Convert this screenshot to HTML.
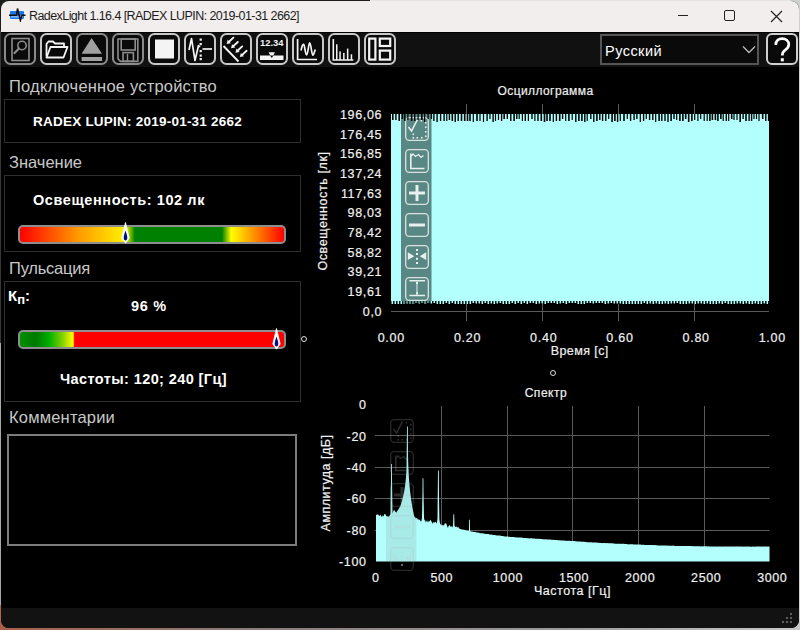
<!DOCTYPE html><html><head><meta charset="utf-8"><style>
*{margin:0;padding:0;box-sizing:border-box}
html,body{width:800px;height:630px;overflow:hidden;background:#1c1c1c}
body{position:relative;font-family:"Liberation Sans",sans-serif}
.a{position:absolute}
.t{position:absolute;white-space:nowrap;line-height:1}
</style></head><body>
<div class="a" style="left:370px;top:0;width:430px;height:2px;background:#e4e4e4"></div>
<div class="a" style="left:790px;top:0;width:10px;height:630px;background:#cfcfcf"></div>
<div class="a" style="left:0;top:30px;width:1px;height:313px;background:#383838"></div>
<div class="a" style="left:0;top:343px;width:1px;height:262px;background:#a8a8a8"></div>
<div class="a" style="left:0;top:605px;width:1px;height:25px;background:#b06848"></div>
<div class="a" style="left:0;top:620px;width:800px;height:10px;background:linear-gradient(90deg,#a8604a,#8a7a78 30%,#9a9a9a 70%,#c8c8c8)"></div>
<div class="a" id="win" style="left:1px;top:1px;width:798px;height:627px;background:#000;border-radius:8px;overflow:hidden">
</div>
<div class="a" style="left:1px;top:1px;width:798px;height:31px;background:#f2eeee;border-radius:8px 8px 0 0"></div>
<div class="a" style="left:1px;top:32px;width:798px;height:35px;background:#111"></div>
<div class="a" style="left:1px;top:32px;width:798px;height:1px;background:#000"></div>
<div class="a" style="left:1px;top:608px;width:798px;height:20px;background:#121212;border-radius:0 0 8px 8px"></div>
<!-- title icon -->
<svg class="a" style="left:8px;top:6px" width="20" height="16" viewBox="0 0 20 16">
<rect x="2" y="5" width="14" height="8" rx="1" fill="#1a78e8"/><rect x="3" y="10" width="12" height="1.6" fill="#7ab8ff"/>
<path d="M1 9.2 H8.5 L9.5 2.5 L12.4 14.5 L14 9.3 H17.5" fill="none" stroke="#111" stroke-width="1.5"/>
</svg>
<!-- window controls -->
<div class="a" style="left:678px;top:15px;width:10px;height:1px;background:#222"></div>
<div class="a" style="left:724px;top:10px;width:11px;height:11px;border:1.2px solid #222;border-radius:2px"></div>
<svg class="a" style="left:770px;top:9.5px" width="13" height="13" viewBox="0 0 13 13"><path d="M1 1 L12 12 M12 1 L1 12" stroke="#222" stroke-width="1.2"/></svg>
<svg class="a" style="left:4px;top:33px" width="32" height="32" viewBox="0 0 32 32">
<rect x="1" y="1" width="30" height="30" rx="5.5" fill="#0a0a0a" stroke="#8a8a8a" stroke-width="2"/><rect x="8" y="5.5" width="17" height="22" fill="none" stroke="#8c8c8c" stroke-width="1.6"/>
<circle cx="18" cy="12.5" r="4.2" fill="none" stroke="#8c8c8c" stroke-width="1.6"/>
<line x1="15" y1="15.5" x2="10.5" y2="20" stroke="#8c8c8c" stroke-width="2.2" stroke-linecap="round"/></svg><svg class="a" style="left:40px;top:33px" width="32" height="32" viewBox="0 0 32 32">
<rect x="1" y="1" width="30" height="30" rx="5.5" fill="#0a0a0a" stroke="#c8c8c8" stroke-width="2"/><path d="M6.5 23.5 V11 L8.5 8.5 H13 L15 10.5 H24 V13" fill="none" stroke="#f4f4f4" stroke-width="1.8" stroke-linejoin="round"/>
<path d="M6.5 24.5 L10.5 14 H27.5 L23.5 24.5 Z" fill="none" stroke="#f4f4f4" stroke-width="1.8" stroke-linejoin="round"/></svg><svg class="a" style="left:76px;top:33px" width="32" height="32" viewBox="0 0 32 32">
<rect x="1" y="1" width="30" height="30" rx="5.5" fill="#0a0a0a" stroke="#8a8a8a" stroke-width="2"/><path d="M15.6 5 L26 20.8 H5.6 Z" fill="#a0a0a0"/><rect x="5.6" y="24" width="20.5" height="4" fill="#a0a0a0"/></svg><svg class="a" style="left:112px;top:33px" width="32" height="32" viewBox="0 0 32 32">
<rect x="1" y="1" width="30" height="30" rx="5.5" fill="#0a0a0a" stroke="#8a8a8a" stroke-width="2"/><path d="M6 6 H25.8 V28.4 H8.5 L6 25.9 Z" fill="none" stroke="#8c8c8c" stroke-width="1.6"/>
<rect x="9.2" y="6" width="14" height="11" fill="none" stroke="#8c8c8c" stroke-width="1.6"/>
<rect x="11" y="19.6" width="10.4" height="8.8" fill="none" stroke="#8c8c8c" stroke-width="1.6"/>
<line x1="15.5" y1="21" x2="15.5" y2="28" stroke="#8c8c8c" stroke-width="1.4"/></svg><svg class="a" style="left:148px;top:33px" width="32" height="32" viewBox="0 0 32 32">
<rect x="1" y="1" width="30" height="30" rx="5.5" fill="#0a0a0a" stroke="#c8c8c8" stroke-width="2"/><rect x="7" y="6.5" width="19" height="19" fill="#f4f4f4"/></svg><svg class="a" style="left:184px;top:33px" width="32" height="32" viewBox="0 0 32 32">
<rect x="1" y="1" width="30" height="30" rx="5.5" fill="#0a0a0a" stroke="#c8c8c8" stroke-width="2"/><path d="M5 17 L7.5 5.5 L11 27.5 L14.5 12.5 L16 14" fill="none" stroke="#f4f4f4" stroke-width="1.7" stroke-linejoin="round"/>
<rect x="15.6" y="5.5" width="2.2" height="2.2" fill="#f4f4f4"/><rect x="15.6" y="10" width="2.2" height="2.2" fill="#f4f4f4"/>
<rect x="15.6" y="17" width="2.2" height="2.2" fill="#f4f4f4"/><rect x="15.6" y="21.5" width="2.2" height="2.2" fill="#f4f4f4"/><rect x="15.6" y="25" width="2.2" height="2.2" fill="#f4f4f4"/>
<line x1="18.5" y1="16" x2="28" y2="16" stroke="#f4f4f4" stroke-width="1.7"/></svg><svg class="a" style="left:220px;top:33px" width="32" height="32" viewBox="0 0 32 32">
<rect x="1" y="1" width="30" height="30" rx="5.5" fill="#0a0a0a" stroke="#c8c8c8" stroke-width="2"/><line x1="3.5" y1="13" x2="18.5" y2="28.5" stroke="#f4f4f4" stroke-width="1.8"/><line x1="13.40" y1="4.60" x2="9.25" y2="8.46" stroke="#f4f4f4" stroke-width="1.9" stroke-linecap="round"/><path d="M6.60 10.90 L10.81 10.15 L7.69 6.77 Z" fill="#f4f4f4"/><line x1="17.80" y1="9.00" x2="13.65" y2="12.86" stroke="#f4f4f4" stroke-width="1.9" stroke-linecap="round"/><path d="M11.00 15.30 L15.21 14.55 L12.09 11.17 Z" fill="#f4f4f4"/><line x1="22.20" y1="13.40" x2="18.05" y2="17.26" stroke="#f4f4f4" stroke-width="1.9" stroke-linecap="round"/><path d="M15.40 19.70 L19.61 18.95 L16.49 15.57 Z" fill="#f4f4f4"/><line x1="26.60" y1="17.80" x2="22.45" y2="21.66" stroke="#f4f4f4" stroke-width="1.9" stroke-linecap="round"/><path d="M19.80 24.10 L24.01 23.35 L20.89 19.97 Z" fill="#f4f4f4"/></svg><svg class="a" style="left:256px;top:33px" width="32" height="32" viewBox="0 0 32 32">
<rect x="1" y="1" width="30" height="30" rx="5.5" fill="#0a0a0a" stroke="#c8c8c8" stroke-width="2"/><text x="4" y="13" font-family="Liberation Sans" font-weight="700" font-size="9.9" fill="#f4f4f4" textLength="23.4" lengthAdjust="spacingAndGlyphs">12.34</text>
<rect x="4" y="22.5" width="23.5" height="4.5" fill="#f4f4f4"/><path d="M12.5 19.3 H19 L15.75 25 Z" fill="#f4f4f4"/><path d="M14 22.5 H17.5 L15.75 25 Z" fill="#0a0a0a"/></svg><svg class="a" style="left:292px;top:33px" width="32" height="32" viewBox="0 0 32 32">
<rect x="1" y="1" width="30" height="30" rx="5.5" fill="#0a0a0a" stroke="#c8c8c8" stroke-width="2"/><path d="M5.6 6 V26.5 H25" fill="none" stroke="#f4f4f4" stroke-width="1.7"/>
<path d="M9 17.5 C10 13, 10.8 11, 11.6 11.3 C12.8 11.8, 13.2 21.8, 14.6 21.8 C16 21.8, 16.5 9.9, 17.7 9.9 C19 9.9, 19.6 22.2, 20.9 22.2 C22 22.2, 22.5 18, 23.4 16.5" fill="none" stroke="#f4f4f4" stroke-width="1.7"/></svg><svg class="a" style="left:328px;top:33px" width="32" height="32" viewBox="0 0 32 32">
<rect x="1" y="1" width="30" height="30" rx="5.5" fill="#0a0a0a" stroke="#c8c8c8" stroke-width="2"/><path d="M5.3 6 V27 H25.3" fill="none" stroke="#f4f4f4" stroke-width="1.6"/><rect x="8" y="11.3" width="1.5" height="15.7" fill="#f4f4f4"/><rect x="11.3" y="18.4" width="1.5" height="8.600000000000001" fill="#f4f4f4"/><rect x="15.1" y="19.9" width="1.5" height="7.100000000000001" fill="#f4f4f4"/><rect x="18.9" y="15.6" width="1.5" height="11.4" fill="#f4f4f4"/><rect x="22.7" y="21.3" width="1.5" height="5.699999999999999" fill="#f4f4f4"/></svg><svg class="a" style="left:364px;top:33px" width="32" height="32" viewBox="0 0 32 32">
<rect x="1" y="1" width="30" height="30" rx="5.5" fill="#0a0a0a" stroke="#c8c8c8" stroke-width="2"/><rect x="5.2" y="5.6" width="6.2" height="21" fill="none" stroke="#f4f4f4" stroke-width="2.2"/>
<rect x="15.8" y="5.6" width="10.4" height="7.4" fill="none" stroke="#f4f4f4" stroke-width="2.2"/>
<rect x="15.8" y="17.6" width="10.4" height="9" fill="none" stroke="#f4f4f4" stroke-width="2.2"/></svg>
<!-- language combo -->
<div class="a" style="left:600px;top:34px;width:159px;height:31px;border:2px solid #555;background:#0a0a0a"></div>
<svg class="a" style="left:742px;top:45px" width="14" height="9" viewBox="0 0 14 9"><path d="M1 1.5 L7 7.5 L13 1.5" fill="none" stroke="#bbb" stroke-width="1.3"/></svg>
<svg class="a" style="left:766px;top:33px" width="32" height="32" viewBox="766 33 32 32">
<rect x="767" y="34" width="30" height="30" rx="5" fill="#0a0a0a" stroke="#d0d0d0" stroke-width="2"/>
<path d="M775.8 45 C775.8 40.5, 778.8 38.6, 782.2 38.6 C785.8 38.6, 788.8 40.8, 788.8 44.5 C788.8 47.8, 786.5 49.2, 784.5 50.6 C783 51.7, 782.3 52.8, 782.3 55.6" fill="none" stroke="#fff" stroke-width="2.7"/>
<rect x="780.8" y="58.2" width="3" height="3.2" fill="#fff"/></svg>

<!-- left panels -->
<div class="a" style="left:4px;top:99px;width:297px;height:44px;border:1px solid #2e2e2e"></div>
<div class="a" style="left:4px;top:175px;width:297px;height:77px;border:1px solid #2e2e2e"></div>
<div class="a" style="left:4px;top:281px;width:297px;height:121px;border:1px solid #2e2e2e"></div>
<div class="a" style="left:7px;top:434px;width:290px;height:112px;border:2px solid #7c7c7c"></div>
<!-- gauges -->
<div class="a" style="left:18px;top:225px;width:268px;height:19px;border:2px solid #8e8e8e;border-radius:5px;background:linear-gradient(90deg,#ff0000 0%,#ff9900 22%,#ffee00 39%,#ffff00 40%,#008000 43.5%,#008000 76.5%,#ffff00 80%,#ff9900 88%,#ff0000 100%)"></div>
<svg class="a" style="left:119px;top:221px" width="13" height="23" viewBox="0 0 13 23"><path d="M6.5 1.5 L10.2 17 L6.5 22.2 L2.8 17 Z" fill="#fff" stroke="#fff" stroke-width="0.8" stroke-linejoin="round"/><path d="M6.5 9.5 C7.5 12.5, 8.3 15, 8.3 16.8 C8.3 18.5, 7.5 19.5, 6.5 19.5 C5.5 19.5, 4.7 18.5, 4.7 16.8 C4.7 15, 5.5 12.5, 6.5 9.5 Z" fill="#000f80"/></svg>
<div class="a" style="left:18px;top:330px;width:268px;height:19px;border:2px solid #8e8e8e;border-radius:5px;background:linear-gradient(90deg,#009000 0%,#007800 6%,#00b000 11%,#80d000 16%,#ffff00 20.1%,#ff0000 20.7%,#ff0000 100%)"></div>
<svg class="a" style="left:269.5px;top:327px" width="13" height="23" viewBox="0 0 13 23"><path d="M6.5 1.5 L10.2 17 L6.5 22.2 L2.8 17 Z" fill="#fff" stroke="#fff" stroke-width="0.8" stroke-linejoin="round"/><path d="M6.5 9.5 C7.5 12.5, 8.3 15, 8.3 16.8 C8.3 18.5, 7.5 19.5, 6.5 19.5 C5.5 19.5, 4.7 18.5, 4.7 16.8 C4.7 15, 5.5 12.5, 6.5 9.5 Z" fill="#000f80"/></svg>
<div class="t" style="left:8px;top:288px;font-size:15px;font-weight:700;color:#fff">К<span style="font-size:13px;position:relative;top:3px">п</span>:</div>
<!-- splitter handles -->
<div class="a" style="left:300.5px;top:336.3px;width:6.2px;height:6.2px;border:1.2px solid #ddd;border-radius:50%"></div>
<div class="a" style="left:549.8px;top:370px;width:6.2px;height:6.2px;border:1.2px solid #ddd;border-radius:50%"></div>
<svg class="a" style="left:0;top:0" width="800" height="630">
<line x1="391" y1="311.5" x2="769" y2="311.5" stroke="#5a5a5a" stroke-width="1"/>
<line x1="466.5" y1="104" x2="466.5" y2="115" stroke="#5a5a5a"/><line x1="466.5" y1="304" x2="466.5" y2="321" stroke="#5a5a5a"/><line x1="542.5" y1="104" x2="542.5" y2="115" stroke="#5a5a5a"/><line x1="542.5" y1="304" x2="542.5" y2="321" stroke="#5a5a5a"/><line x1="618.5" y1="104" x2="618.5" y2="115" stroke="#5a5a5a"/><line x1="618.5" y1="304" x2="618.5" y2="321" stroke="#5a5a5a"/><line x1="694.5" y1="104" x2="694.5" y2="115" stroke="#5a5a5a"/><line x1="694.5" y1="304" x2="694.5" y2="321" stroke="#5a5a5a"/>
<rect x="391" y="114" width="378" height="187" fill="#b2fffd"/>
<path d="M391.5 301h1.6v3h-1.6zM394.5 301h1.6v3h-1.6zM397.5 301h1.6v3h-1.6zM400.5 301h1.6v3h-1.6zM403.5 301h1.6v3h-1.6zM406.5 301h1.6v2.5h-1.6zM409.5 301h1.6v3h-1.6zM412.5 301h1.6v3h-1.6zM415.5 301h1.6v2h-1.6zM418.5 301h1.6v2.5h-1.6zM421.5 301h1.6v2h-1.6zM424.5 301h1.6v3h-1.6zM427.5 301h1.6v2h-1.6zM430.5 301h1.6v2.5h-1.6zM433.5 301h1.6v2h-1.6zM436.5 301h1.6v3h-1.6zM439.5 301h1.6v3h-1.6zM442.5 301h1.6v3h-1.6zM445.5 301h1.6v2h-1.6zM448.5 301h1.6v3h-1.6zM451.5 301h1.6v2h-1.6zM454.5 301h1.6v3h-1.6zM457.5 301h1.6v3h-1.6zM460.5 301h1.6v3h-1.6zM463.5 301h1.6v3h-1.6zM466.5 301h1.6v3h-1.6zM469.5 301h1.6v3h-1.6zM472.5 301h1.6v2h-1.6zM475.5 301h1.6v2.5h-1.6zM478.5 301h1.6v2.5h-1.6zM481.5 301h1.6v3h-1.6zM484.5 301h1.6v2h-1.6zM487.5 301h1.6v3h-1.6zM490.5 301h1.6v2.5h-1.6zM493.5 301h1.6v3h-1.6zM496.5 301h1.6v2.5h-1.6zM499.5 301h1.6v2h-1.6zM502.5 301h1.6v3h-1.6zM505.5 301h1.6v3h-1.6zM508.5 301h1.6v3h-1.6zM511.5 301h1.6v2h-1.6zM514.5 301h1.6v3h-1.6zM517.5 301h1.6v2h-1.6zM520.5 301h1.6v3h-1.6zM523.5 301h1.6v2h-1.6zM526.5 301h1.6v3h-1.6zM529.5 301h1.6v2h-1.6zM532.5 301h1.6v2h-1.6zM535.5 301h1.6v3h-1.6zM538.5 301h1.6v2.5h-1.6zM541.5 301h1.6v2.5h-1.6zM544.5 301h1.6v3h-1.6zM547.5 301h1.6v2h-1.6zM550.5 301h1.6v2h-1.6zM553.5 301h1.6v2h-1.6zM556.5 301h1.6v3h-1.6zM559.5 301h1.6v2.5h-1.6zM562.5 301h1.6v2h-1.6zM565.5 301h1.6v3h-1.6zM568.5 301h1.6v2h-1.6zM571.5 301h1.6v2h-1.6zM574.5 301h1.6v2h-1.6zM577.5 301h1.6v3h-1.6zM580.5 301h1.6v3h-1.6zM583.5 301h1.6v3h-1.6zM586.5 301h1.6v2h-1.6zM589.5 301h1.6v2h-1.6zM592.5 301h1.6v2.5h-1.6zM595.5 301h1.6v2h-1.6zM598.5 301h1.6v2h-1.6zM601.5 301h1.6v2h-1.6zM604.5 301h1.6v3h-1.6zM607.5 301h1.6v2.5h-1.6zM610.5 301h1.6v2h-1.6zM613.5 301h1.6v2.5h-1.6zM616.5 301h1.6v2.5h-1.6zM619.5 301h1.6v2.5h-1.6zM622.5 301h1.6v3h-1.6zM625.5 301h1.6v3h-1.6zM628.5 301h1.6v3h-1.6zM631.5 301h1.6v3h-1.6zM634.5 301h1.6v3h-1.6zM637.5 301h1.6v3h-1.6zM640.5 301h1.6v3h-1.6zM643.5 301h1.6v2h-1.6zM646.5 301h1.6v3h-1.6zM649.5 301h1.6v2.5h-1.6zM652.5 301h1.6v3h-1.6zM655.5 301h1.6v2.5h-1.6zM658.5 301h1.6v3h-1.6zM661.5 301h1.6v3h-1.6zM664.5 301h1.6v2.5h-1.6zM667.5 301h1.6v3h-1.6zM670.5 301h1.6v2.5h-1.6zM673.5 301h1.6v2.5h-1.6zM676.5 301h1.6v2h-1.6zM679.5 301h1.6v3h-1.6zM682.5 301h1.6v3h-1.6zM685.5 301h1.6v3h-1.6zM688.5 301h1.6v2.5h-1.6zM691.5 301h1.6v2.5h-1.6zM694.5 301h1.6v3h-1.6zM697.5 301h1.6v2.5h-1.6zM700.5 301h1.6v2.5h-1.6zM703.5 301h1.6v3h-1.6zM706.5 301h1.6v2.5h-1.6zM709.5 301h1.6v3h-1.6zM712.5 301h1.6v3h-1.6zM715.5 301h1.6v3h-1.6zM718.5 301h1.6v2.5h-1.6zM721.5 301h1.6v3h-1.6zM724.5 301h1.6v2h-1.6zM727.5 301h1.6v3h-1.6zM730.5 301h1.6v3h-1.6zM733.5 301h1.6v3h-1.6zM736.5 301h1.6v2.5h-1.6zM739.5 301h1.6v2.5h-1.6zM742.5 301h1.6v3h-1.6zM745.5 301h1.6v2.5h-1.6zM748.5 301h1.6v3h-1.6zM751.5 301h1.6v3h-1.6zM754.5 301h1.6v2.5h-1.6zM757.5 301h1.6v3h-1.6zM760.5 301h1.6v3h-1.6zM763.5 301h1.6v2.5h-1.6zM766.5 301h1.6v3h-1.6z" fill="#b2fffd"/>
<rect x="401" y="114" width="30.5" height="187" fill="#588784"/>
<path d="M403.5 301h1.6v3h-1.6zM406.5 301h1.6v2.5h-1.6zM409.5 301h1.6v3h-1.6zM412.5 301h1.6v3h-1.6zM415.5 301h1.6v2h-1.6zM418.5 301h1.6v2.5h-1.6zM421.5 301h1.6v2h-1.6zM424.5 301h1.6v3h-1.6zM427.5 301h1.6v2h-1.6z" fill="#588784"/>
</svg>
<svg class="a" style="left:405px;top:117px;opacity:1" width="24" height="24" viewBox="0 0 24 24">
<rect x="0.7" y="0.7" width="22.6" height="22.6" rx="3.5" fill="none" stroke="#d8e4e2" stroke-width="1.3"/><path d="M3.5 10 L6.5 14 L12.5 2.5" fill="none" stroke="#e8f0ef" stroke-width="1.6"/><rect x="15.5" y="3" width="1.6" height="1.6" fill="#e8f0ef"/><rect x="20" y="5" width="1.6" height="1.6" fill="#e8f0ef"/><rect x="20" y="9.5" width="1.6" height="1.6" fill="#e8f0ef"/><rect x="20" y="14" width="1.6" height="1.6" fill="#e8f0ef"/><rect x="20" y="18.5" width="1.6" height="1.6" fill="#e8f0ef"/><rect x="16" y="20" width="1.6" height="1.6" fill="#e8f0ef"/><rect x="11.5" y="20" width="1.6" height="1.6" fill="#e8f0ef"/><rect x="7.5" y="20" width="1.6" height="1.6" fill="#e8f0ef"/><rect x="7.5" y="16.5" width="1.6" height="1.6" fill="#e8f0ef"/></svg><svg class="a" style="left:405px;top:149px;opacity:1" width="24" height="24" viewBox="0 0 24 24">
<rect x="0.7" y="0.7" width="22.6" height="22.6" rx="3.5" fill="none" stroke="#d8e4e2" stroke-width="1.3"/><path d="M5.8 4.5 V19.5 H19.5" fill="none" stroke="#e8f0ef" stroke-width="1.6"/><path d="M5.8 7.5 L8 5 L10.5 7.5 L13.5 5.5 L16 8.5 L18.5 6.5" fill="none" stroke="#e8f0ef" stroke-width="1.2"/></svg><svg class="a" style="left:405px;top:181px;opacity:1" width="24" height="24" viewBox="0 0 24 24">
<rect x="0.7" y="0.7" width="22.6" height="22.6" rx="3.5" fill="none" stroke="#d8e4e2" stroke-width="1.3"/><rect x="4" y="10.5" width="16" height="3" fill="#e8f0ef"/><rect x="10.5" y="4" width="3" height="16" fill="#e8f0ef"/></svg><svg class="a" style="left:405px;top:213px;opacity:1" width="24" height="24" viewBox="0 0 24 24">
<rect x="0.7" y="0.7" width="22.6" height="22.6" rx="3.5" fill="none" stroke="#d8e4e2" stroke-width="1.3"/><rect x="4" y="10.5" width="16" height="3" fill="#e8f0ef"/></svg><svg class="a" style="left:405px;top:245px;opacity:1" width="24" height="24" viewBox="0 0 24 24">
<rect x="0.7" y="0.7" width="22.6" height="22.6" rx="3.5" fill="none" stroke="#d8e4e2" stroke-width="1.3"/><path d="M2.8 7.3 L9.3 11.2 L2.8 15 Z M21.2 7.3 L14.7 11.2 L21.2 15 Z" fill="#e8f0ef"/><rect x="11" y="4" width="2" height="2" fill="#e8f0ef"/><rect x="11" y="8" width="2" height="2" fill="#e8f0ef"/><rect x="11" y="12.8" width="2" height="2" fill="#e8f0ef"/><rect x="11" y="17" width="2" height="2" fill="#e8f0ef"/></svg><svg class="a" style="left:405px;top:277px;opacity:1" width="24" height="24" viewBox="0 0 24 24">
<rect x="0.7" y="0.7" width="22.6" height="22.6" rx="3.5" fill="none" stroke="#d8e4e2" stroke-width="1.3"/><path d="M4.4 3.8 H20.1 M4.4 18.4 H20.1" fill="none" stroke="#e8f0ef" stroke-width="1.5"/><path d="M12 4.5 V17.7" fill="none" stroke="#e8f0ef" stroke-width="1"/><rect x="11" y="5" width="2" height="2" fill="#e8f0ef"/><rect x="11" y="15.3" width="2" height="2" fill="#e8f0ef"/></svg>
<svg class="a" style="left:0;top:0" width="800" height="630"><path d="M392.0 114h1.6v6h-1.6zM395.2 114h1.4v6h-1.4zM398.4 114h1.6v7h-1.6zM401.6 114h1.6v5h-1.6zM404.1 114h1.4v7h-1.4zM407.3 114h1.2v6h-1.2zM410.8 114h1.6v7h-1.6zM414.0 114h1.4v7h-1.4zM417.5 114h1.2v6h-1.2zM421.0 114h1.6v6h-1.6zM424.0 114h1.2v8h-1.2zM427.5 114h1.2v5h-1.2zM430.7 114h1.4v5h-1.4zM433.2 114h1.4v7h-1.4zM436.4 114h1.4v8h-1.4zM439.9 114h1.4v7h-1.4zM443.4 114h1.4v7h-1.4zM446.2 114h1.2v7h-1.2zM448.7 114h1.4v6h-1.4zM451.5 114h1.6v7h-1.6zM454.5 114h1.4v8h-1.4zM457.5 114h1.4v7h-1.4zM460.7 114h1.6v7h-1.6zM463.9 114h1.6v7h-1.6zM466.7 114h1.6v7h-1.6zM469.2 114h1.6v7h-1.6zM472.7 114h1.2v8h-1.2zM476.2 114h1.6v7h-1.6zM479.4 114h1.2v7h-1.2zM482.9 114h1.2v8h-1.2zM486.4 114h1.4v7h-1.4zM489.4 114h1.2v5h-1.2zM492.4 114h1.4v8h-1.4zM494.9 114h1.2v7h-1.2zM497.9 114h1.2v6h-1.2zM500.9 114h1.4v7h-1.4zM503.4 114h1.6v5h-1.6zM506.6 114h1.4v5h-1.4zM510.1 114h1.4v7h-1.4zM513.3 114h1.6v7h-1.6zM516.1 114h1.4v5h-1.4zM518.6 114h1.2v5h-1.2zM521.8 114h1.2v7h-1.2zM524.6 114h1.4v7h-1.4zM527.8 114h1.2v7h-1.2zM531.3 114h1.4v5h-1.4zM534.3 114h1.2v7h-1.2zM537.3 114h1.4v7h-1.4zM540.5 114h1.6v7h-1.6zM543.7 114h1.6v8h-1.6zM546.2 114h1.6v7h-1.6zM549.2 114h1.6v7h-1.6zM552.7 114h1.2v8h-1.2zM555.7 114h1.4v7h-1.4zM558.9 114h1.6v7h-1.6zM561.9 114h1.4v5h-1.4zM565.1 114h1.2v7h-1.2zM568.1 114h1.6v7h-1.6zM571.6 114h1.2v6h-1.2zM575.1 114h1.4v8h-1.4zM578.1 114h1.6v7h-1.6zM581.1 114h1.6v7h-1.6zM584.1 114h1.4v8h-1.4zM586.6 114h1.2v7h-1.2zM590.1 114h1.4v5h-1.4zM593.1 114h1.4v8h-1.4zM596.1 114h1.6v7h-1.6zM599.1 114h1.4v6h-1.4zM601.9 114h1.4v7h-1.4zM605.1 114h1.4v7h-1.4zM608.1 114h1.2v5h-1.2zM611.3 114h1.6v8h-1.6zM614.1 114h1.6v7h-1.6zM616.9 114h1.4v8h-1.4zM619.7 114h1.2v7h-1.2zM623.2 114h1.6v7h-1.6zM626.7 114h1.2v5h-1.2zM629.9 114h1.4v7h-1.4zM633.4 114h1.4v6h-1.4zM636.2 114h1.4v5h-1.4zM639.7 114h1.2v8h-1.2zM642.9 114h1.4v7h-1.4zM645.7 114h1.2v5h-1.2zM648.9 114h1.4v6h-1.4zM652.1 114h1.4v6h-1.4zM655.1 114h1.2v8h-1.2zM658.3 114h1.6v7h-1.6zM661.1 114h1.4v7h-1.4zM664.3 114h1.4v7h-1.4zM667.3 114h1.4v8h-1.4zM670.3 114h1.6v7h-1.6zM673.3 114h1.4v5h-1.4zM676.1 114h1.2v6h-1.2zM679.1 114h1.6v7h-1.6zM682.1 114h1.6v7h-1.6zM684.9 114h1.6v5h-1.6zM687.9 114h1.6v8h-1.6zM691.1 114h1.6v7h-1.6zM694.1 114h1.2v6h-1.2zM697.3 114h1.2v7h-1.2zM700.1 114h1.2v5h-1.2zM703.6 114h1.2v7h-1.2zM706.6 114h1.2v7h-1.2zM709.1 114h1.6v7h-1.6zM711.6 114h1.6v6h-1.6zM714.6 114h1.6v6h-1.6zM717.1 114h1.6v7h-1.6zM720.1 114h1.6v5h-1.6zM722.6 114h1.2v7h-1.2zM725.6 114h1.4v7h-1.4zM728.1 114h1.2v7h-1.2zM730.9 114h1.6v5h-1.6zM733.4 114h1.2v6h-1.2zM736.4 114h1.2v6h-1.2zM739.4 114h1.6v8h-1.6zM742.4 114h1.4v5h-1.4zM745.2 114h1.6v7h-1.6zM748.4 114h1.4v7h-1.4zM750.9 114h1.4v7h-1.4zM753.4 114h1.2v5h-1.2zM755.9 114h1.2v5h-1.2zM758.4 114h1.2v7h-1.2zM761.9 114h1.6v5h-1.6zM765.1 114h1.4v7h-1.4zM767.9 114h1.2v7h-1.2z" fill="#000"/></svg>
<svg class="a" style="left:0;top:0" width="800" height="630"><line x1="375" y1="435.5" x2="769.5" y2="435.5" stroke="#5a5a5a"/><line x1="375" y1="467.5" x2="769.5" y2="467.5" stroke="#5a5a5a"/><line x1="375" y1="498.5" x2="769.5" y2="498.5" stroke="#5a5a5a"/><line x1="375" y1="530.5" x2="769.5" y2="530.5" stroke="#5a5a5a"/><line x1="441.5" y1="406" x2="441.5" y2="561" stroke="#5a5a5a"/><line x1="507.5" y1="406" x2="507.5" y2="561" stroke="#5a5a5a"/><line x1="572.5" y1="406" x2="572.5" y2="561" stroke="#5a5a5a"/><line x1="638.5" y1="406" x2="638.5" y2="561" stroke="#5a5a5a"/><line x1="704.5" y1="406" x2="704.5" y2="561" stroke="#5a5a5a"/>
<path d="M376 561.5 L376 515.2 L376.5 515.0 L377 513.9 L377.5 514.5 L378 514.8 L378.5 514.8 L379 515.9 L379.5 515.7 L380 515.3 L380.5 514.6 L381 516.1 L381.5 516.5 L382 517.3 L382.5 515.8 L383 515.3 L383.5 516.8 L384 515.1 L384.5 513.9 L385 514.0 L385.5 514.2 L386 515.5 L386.5 516.6 L387 515.8 L387.5 516.5 L388 516.6 L388.5 516.4 L389 516.8 L389.5 515.8 L390 515.2 L390.5 513.6 L391 478.2 L391.1 464.1 L391.5 464.1 L391.9 464.1 L392 478.2 L392.5 513.7 L393 511.8 L393.5 510.6 L394 510.2 L394.5 510.3 L395 511.3 L395.5 512.0 L396 512.2 L396.5 512.8 L397 511.1 L397.5 511.0 L398 509.6 L398.5 509.8 L399 508.2 L399.5 507.4 L400 507.0 L400.5 505.6 L401 504.1 L401.5 502.5 L402 500.8 L402.5 499.0 L403 497.0 L403.5 494.8 L404 492.4 L404.5 489.6 L405 486.3 L405.5 482.4 L406 477.3 L406.4 471.5 L406.5 469.6 L407 426.5 L407.5 426.5 L407.8 426.5 L408 456.4 L408.4 468.9 L408.5 471.0 L409 479.3 L409.5 485.4 L410 490.5 L410.5 494.8 L411 498.5 L411.5 501.9 L412 505.0 L412.5 507.9 L413 510.5 L413.5 513.0 L414 515.4 L414.5 517.2 L415 516.5 L415.5 518.1 L416 518.7 L416.5 517.9 L417 518.1 L417.5 519.7 L418 518.2 L418.5 519.6 L419 520.4 L419.5 519.4 L420 520.2 L420.5 520.8 L421 521.8 L421.5 520.7 L422 517.6 L422.5 492.3 L422.6 478.2 L423 478.2 L423.4 478.2 L423.5 492.3 L424 517.6 L424.5 520.6 L425 520.0 L425.5 521.5 L426 522.4 L426.5 520.9 L427 520.3 L427.5 521.6 L428 522.5 L428.5 521.5 L429 520.4 L429.5 521.8 L430 520.6 L430.5 520.1 L431 520.6 L431.5 521.4 L432 522.8 L432.5 523.9 L433 521.9 L433.5 522.8 L434 522.0 L434.5 522.9 L435 521.8 L435.5 521.8 L436 522.7 L436.5 523.6 L437 522.1 L437.4 519.6 L437.5 519.0 L438 470.4 L438.5 470.4 L438.8 470.4 L439 498.6 L439.4 519.6 L439.5 520.2 L440 523.3 L440.5 524.6 L441 524.3 L441.5 525.3 L442 525.6 L442.5 525.3 L443 524.7 L443.5 525.6 L444 525.5 L444.5 524.1 L445 523.0 L445.5 523.4 L446 523.6 L446.5 524.1 L447 525.7 L447.5 527.0 L448 527.9 L448.5 526.0 L449 525.5 L449.5 524.6 L450 526.7 L450.5 526.3 L451 526.6 L451.5 526.2 L452 527.1 L452.5 525.8 L452.8 527.7 L453 527.4 L453.4 514.3 L453.5 514.3 L454 514.3 L454.2 514.3 L454.5 526.1 L454.8 525.7 L455 527.1 L455.5 527.1 L456 526.6 L456.5 526.4 L457 527.5 L457.5 527.2 L458 526.9 L458.5 527.5 L459 527.8 L459.5 528.7 L460 528.9 L460.5 529.1 L461 529.3 L461.5 529.4 L462 529.4 L462.5 529.5 L463 529.6 L463.5 529.8 L464 529.8 L464.5 530.0 L465 530.1 L465.5 530.1 L466 530.4 L466.5 530.4 L467 530.6 L467.5 530.7 L468 530.7 L468.5 530.9 L469 530.9 L469.1 519.7 L469.5 519.7 L469.9 519.7 L470 531.1 L470.5 531.3 L471 531.4 L471.5 531.4 L472 531.6 L472.5 531.7 L473 531.7 L473.5 531.8 L474 531.9 L474.5 531.9 L475 532.1 L475.5 532.1 L476 532.3 L476.5 532.4 L477 532.4 L477.5 532.5 L478 532.5 L478.5 532.7 L479 532.8 L479.5 533.0 L480 533.2 L480.5 533.2 L481 533.2 L481.5 533.2 L482 533.2 L482.5 533.2 L483 533.4 L483.5 533.6 L484 533.6 L484.5 533.7 L485 533.8 L485.5 533.9 L486 533.9 L486.5 533.9 L487 534.0 L487.5 534.0 L488 534.0 L488.5 534.1 L489 534.3 L489.5 534.5 L490 534.4 L490.5 534.6 L491 534.5 L491.5 534.6 L492 534.7 L492.5 534.7 L493 534.9 L493.5 535.0 L494 535.0 L494.5 535.1 L495 535.1 L495.5 535.2 L496 535.3 L496.5 535.4 L497 535.4 L497.5 535.4 L498 535.4 L498.5 535.5 L499 535.5 L499.5 535.5 L500 535.6 L500.5 535.7 L501 535.8 L501.5 536.0 L502 536.1 L502.5 536.1 L503 536.1 L503.5 536.2 L504 536.3 L504.5 536.4 L505 536.4 L505.5 536.4 L506 536.4 L506.5 536.5 L507 536.6 L507.5 536.6 L508 536.6 L508.5 536.8 L509 536.8 L509.5 536.8 L510 537.0 L510.5 537.1 L511 537.0 L511.5 537.0 L512 537.1 L512.5 537.1 L513 537.1 L513.5 537.1 L514 537.1 L514.5 537.2 L515 537.2 L515.5 537.4 L516 537.3 L516.5 537.3 L517 537.4 L517.5 537.4 L518 537.5 L518.5 537.5 L519 537.4 L519.5 537.4 L520 537.5 L520.5 537.5 L521 537.7 L521.5 537.6 L522 537.6 L522.5 537.8 L523 537.9 L523.5 537.9 L524 537.9 L524.5 537.9 L525 538.0 L525.5 538.1 L526 538.0 L526.5 538.2 L527 538.1 L527.5 538.2 L528 538.3 L528.5 538.2 L529 538.3 L529.5 538.4 L530 538.4 L530.5 538.3 L531 538.3 L531.5 538.3 L532 538.3 L532.5 538.4 L533 538.4 L533.5 538.5 L534 538.6 L534.5 538.6 L535 538.7 L535.5 538.7 L536 538.7 L536.5 538.7 L537 538.7 L537.5 538.7 L538 538.8 L538.5 538.9 L539 538.8 L539.5 538.8 L540 539.0 L540.5 538.9 L541 538.9 L541.5 539.0 L542 539.0 L542.5 539.2 L543 539.2 L543.5 539.2 L544 539.2 L544.5 539.4 L545 539.3 L545.5 539.3 L546 539.4 L546.5 539.3 L547 539.4 L547.5 539.4 L548 539.4 L548.5 539.6 L549 539.6 L549.5 539.6 L550 539.5 L550.5 539.5 L551 539.7 L551.5 539.7 L552 539.8 L552.5 539.9 L553 539.8 L553.5 539.7 L554 539.8 L554.5 539.9 L555 540.0 L555.5 540.0 L556 539.9 L556.5 540.1 L557 540.0 L557.5 540.2 L558 540.3 L558.5 540.3 L559 540.3 L559.5 540.3 L560 540.4 L560.5 540.3 L561 540.5 L561.5 540.4 L562 540.5 L562.5 540.5 L563 540.6 L563.5 540.6 L564 540.6 L564.5 540.6 L565 540.7 L565.5 540.7 L566 540.7 L566.5 540.8 L567 540.9 L567.5 540.8 L568 540.8 L568.5 540.8 L569 540.8 L569.5 540.8 L570 540.8 L570.5 540.9 L571 540.9 L571.5 540.9 L572 540.9 L572.5 541.0 L573 541.1 L573.5 541.1 L574 541.2 L574.5 541.1 L575 541.1 L575.5 541.3 L576 541.4 L576.5 541.3 L577 541.4 L577.5 541.5 L578 541.4 L578.5 541.5 L579 541.5 L579.5 541.6 L580 541.6 L580.5 541.6 L581 541.7 L581.5 541.8 L582 541.7 L582.5 541.7 L583 541.6 L583.5 541.8 L584 541.8 L584.5 541.8 L585 541.9 L585.5 541.9 L586 542.0 L586.5 542.1 L587 542.2 L587.5 542.3 L588 542.2 L588.5 542.2 L589 542.2 L589.5 542.3 L590 542.3 L590.5 542.4 L591 542.3 L591.5 542.2 L592 542.2 L592.5 542.4 L593 542.5 L593.5 542.4 L594 542.5 L594.5 542.4 L595 542.5 L595.5 542.6 L596 542.6 L596.5 542.6 L597 542.6 L597.5 542.8 L598 542.7 L598.5 542.7 L599 542.8 L599.5 542.9 L600 542.8 L600.5 542.9 L601 543.0 L601.5 543.1 L602 543.1 L602.5 543.2 L603 543.0 L603.5 543.0 L604 543.0 L604.5 543.0 L605 543.0 L605.5 543.1 L606 543.2 L606.5 543.2 L607 543.1 L607.5 543.1 L608 543.3 L608.5 543.2 L609 543.2 L609.5 543.2 L610 543.2 L610.5 543.3 L611 543.3 L611.5 543.3 L612 543.3 L612.5 543.3 L613 543.4 L613.5 543.5 L614 543.5 L614.5 543.6 L615 543.7 L615.5 543.7 L616 543.8 L616.5 543.8 L617 543.7 L617.5 543.7 L618 543.8 L618.5 543.7 L619 543.7 L619.5 543.8 L620 543.8 L620.5 543.8 L621 543.8 L621.5 543.9 L622 543.8 L622.5 543.8 L623 543.8 L623.5 543.8 L624 543.8 L624.5 544.0 L625 544.0 L625.5 544.0 L626 544.1 L626.5 544.1 L627 544.2 L627.5 544.3 L628 544.3 L628.5 544.3 L629 544.4 L629.5 544.2 L630 544.2 L630.5 544.3 L631 544.2 L631.5 544.2 L632 544.2 L632.5 544.2 L633 544.2 L633.5 544.4 L634 544.4 L634.5 544.4 L635 544.5 L635.5 544.4 L636 544.5 L636.5 544.5 L637 544.6 L637.5 544.6 L638 544.6 L638.5 544.7 L639 544.6 L639.5 544.6 L640 544.6 L640.5 544.6 L641 544.7 L641.5 544.8 L642 544.7 L642.5 544.7 L643 544.8 L643.5 544.8 L644 544.8 L644.5 545.0 L645 545.0 L645.5 545.1 L646 545.1 L646.5 545.0 L647 545.0 L647.5 544.9 L648 544.9 L648.5 545.0 L649 544.9 L649.5 544.9 L650 545.1 L650.5 545.0 L651 545.1 L651.5 545.1 L652 545.0 L652.5 545.1 L653 545.2 L653.5 545.1 L654 545.1 L654.5 545.2 L655 545.1 L655.5 545.1 L656 545.2 L656.5 545.3 L657 545.3 L657.5 545.4 L658 545.4 L658.5 545.5 L659 545.5 L659.5 545.6 L660 545.6 L660.5 545.5 L661 545.5 L661.5 545.6 L662 545.6 L662.5 545.6 L663 545.5 L663.5 545.6 L664 545.5 L664.5 545.4 L665 545.5 L665.5 545.6 L666 545.7 L666.5 545.6 L667 545.6 L667.5 545.6 L668 545.7 L668.5 545.7 L669 545.7 L669.5 545.7 L670 545.7 L670.5 545.7 L671 545.7 L671.5 545.8 L672 545.8 L672.5 545.7 L673 545.6 L673.5 545.6 L674 545.8 L674.5 545.9 L675 545.9 L675.5 545.9 L676 545.9 L676.5 545.9 L677 545.9 L677.5 546.0 L678 546.0 L678.5 545.9 L679 545.9 L679.5 545.9 L680 545.9 L680.5 545.9 L681 546.0 L681.5 546.0 L682 545.9 L682.5 545.9 L683 546.0 L683.5 546.1 L684 546.0 L684.5 546.0 L685 545.9 L685.5 546.0 L686 546.0 L686.5 546.1 L687 546.0 L687.5 546.1 L688 546.0 L688.5 545.9 L689 546.0 L689.5 546.0 L690 546.0 L690.5 546.0 L691 546.0 L691.5 546.1 L692 546.2 L692.5 546.1 L693 546.2 L693.5 546.3 L694 546.2 L694.5 546.2 L695 546.2 L695.5 546.2 L696 546.1 L696.5 546.3 L697 546.3 L697.5 546.2 L698 546.3 L698.5 546.3 L699 546.3 L699.5 546.2 L700 546.3 L700.5 546.4 L701 546.4 L701.5 546.3 L702 546.3 L702.5 546.4 L703 546.3 L703.5 546.3 L704 546.2 L704.5 546.2 L705 546.2 L705.5 546.3 L706 546.2 L706.5 546.3 L707 546.4 L707.5 546.4 L708 546.3 L708.5 546.3 L709 546.4 L709.5 546.4 L710 546.5 L710.5 546.5 L711 546.5 L711.5 546.5 L712 546.6 L712.5 546.5 L713 546.5 L713.5 546.5 L714 546.4 L714.5 546.4 L715 546.6 L715.5 546.5 L716 546.4 L716.5 546.5 L717 546.7 L717.5 546.6 L718 546.6 L718.5 546.6 L719 546.5 L719.5 546.5 L720 546.4 L720.5 546.6 L721 546.6 L721.5 546.5 L722 546.6 L722.5 546.7 L723 546.6 L723.5 546.5 L724 546.6 L724.5 546.6 L725 546.6 L725.5 546.6 L726 546.5 L726.5 546.6 L727 546.6 L727.5 546.6 L728 546.6 L728.5 546.5 L729 546.5 L729.5 546.6 L730 546.5 L730.5 546.5 L731 546.5 L731.5 546.5 L732 546.5 L732.5 546.5 L733 546.4 L733.5 546.5 L734 546.4 L734.5 546.5 L735 546.4 L735.5 546.4 L736 546.4 L736.5 546.4 L737 546.3 L737.5 546.4 L738 546.5 L738.5 546.5 L739 546.4 L739.5 546.5 L740 546.5 L740.5 546.6 L741 546.5 L741.5 546.4 L742 546.5 L742.5 546.6 L743 546.7 L743.5 546.6 L744 546.7 L744.5 546.5 L745 546.6 L745.5 546.6 L746 546.7 L746.5 546.6 L747 546.5 L747.5 546.6 L748 546.7 L748.5 546.6 L749 546.6 L749.5 546.5 L750 546.6 L750.5 546.7 L751 546.7 L751.5 546.7 L752 546.7 L752.5 546.6 L753 546.6 L753.5 546.6 L754 546.7 L754.5 546.7 L755 546.7 L755.5 546.6 L756 546.6 L756.5 546.6 L757 546.5 L757.5 546.5 L758 546.6 L758.5 546.5 L759 546.4 L759.5 546.5 L760 546.5 L760.5 546.4 L761 546.5 L761.5 546.6 L762 546.7 L762.5 546.5 L763 546.5 L763.5 546.5 L764 546.5 L764.5 546.5 L765 546.6 L765.5 546.5 L766 546.5 L766.5 546.6 L767 546.7 L767.5 546.6 L768 546.6 L768.5 546.5 L769 546.5 L769.5 546.5 L769.5 561.5 Z" fill="#b2fffd"/>
<clipPath id="spc"><path d="M376 561.5 L376 515.2 L376.5 515.0 L377 513.9 L377.5 514.5 L378 514.8 L378.5 514.8 L379 515.9 L379.5 515.7 L380 515.3 L380.5 514.6 L381 516.1 L381.5 516.5 L382 517.3 L382.5 515.8 L383 515.3 L383.5 516.8 L384 515.1 L384.5 513.9 L385 514.0 L385.5 514.2 L386 515.5 L386.5 516.6 L387 515.8 L387.5 516.5 L388 516.6 L388.5 516.4 L389 516.8 L389.5 515.8 L390 515.2 L390.5 513.6 L391 478.2 L391.1 464.1 L391.5 464.1 L391.9 464.1 L392 478.2 L392.5 513.7 L393 511.8 L393.5 510.6 L394 510.2 L394.5 510.3 L395 511.3 L395.5 512.0 L396 512.2 L396.5 512.8 L397 511.1 L397.5 511.0 L398 509.6 L398.5 509.8 L399 508.2 L399.5 507.4 L400 507.0 L400.5 505.6 L401 504.1 L401.5 502.5 L402 500.8 L402.5 499.0 L403 497.0 L403.5 494.8 L404 492.4 L404.5 489.6 L405 486.3 L405.5 482.4 L406 477.3 L406.4 471.5 L406.5 469.6 L407 426.5 L407.5 426.5 L407.8 426.5 L408 456.4 L408.4 468.9 L408.5 471.0 L409 479.3 L409.5 485.4 L410 490.5 L410.5 494.8 L411 498.5 L411.5 501.9 L412 505.0 L412.5 507.9 L413 510.5 L413.5 513.0 L414 515.4 L414.5 517.2 L415 516.5 L415.5 518.1 L416 518.7 L416.5 517.9 L417 518.1 L417.5 519.7 L418 518.2 L418.5 519.6 L419 520.4 L419.5 519.4 L420 520.2 L420.5 520.8 L421 521.8 L421.5 520.7 L422 517.6 L422.5 492.3 L422.6 478.2 L423 478.2 L423.4 478.2 L423.5 492.3 L424 517.6 L424.5 520.6 L425 520.0 L425.5 521.5 L426 522.4 L426.5 520.9 L427 520.3 L427.5 521.6 L428 522.5 L428.5 521.5 L429 520.4 L429.5 521.8 L430 520.6 L430.5 520.1 L431 520.6 L431.5 521.4 L432 522.8 L432.5 523.9 L433 521.9 L433.5 522.8 L434 522.0 L434.5 522.9 L435 521.8 L435.5 521.8 L436 522.7 L436.5 523.6 L437 522.1 L437.4 519.6 L437.5 519.0 L438 470.4 L438.5 470.4 L438.8 470.4 L439 498.6 L439.4 519.6 L439.5 520.2 L440 523.3 L440.5 524.6 L441 524.3 L441.5 525.3 L442 525.6 L442.5 525.3 L443 524.7 L443.5 525.6 L444 525.5 L444.5 524.1 L445 523.0 L445.5 523.4 L446 523.6 L446.5 524.1 L447 525.7 L447.5 527.0 L448 527.9 L448.5 526.0 L449 525.5 L449.5 524.6 L450 526.7 L450.5 526.3 L451 526.6 L451.5 526.2 L452 527.1 L452.5 525.8 L452.8 527.7 L453 527.4 L453.4 514.3 L453.5 514.3 L454 514.3 L454.2 514.3 L454.5 526.1 L454.8 525.7 L455 527.1 L455.5 527.1 L456 526.6 L456.5 526.4 L457 527.5 L457.5 527.2 L458 526.9 L458.5 527.5 L459 527.8 L459.5 528.7 L460 528.9 L460.5 529.1 L461 529.3 L461.5 529.4 L462 529.4 L462.5 529.5 L463 529.6 L463.5 529.8 L464 529.8 L464.5 530.0 L465 530.1 L465.5 530.1 L466 530.4 L466.5 530.4 L467 530.6 L467.5 530.7 L468 530.7 L468.5 530.9 L469 530.9 L469.1 519.7 L469.5 519.7 L469.9 519.7 L470 531.1 L470.5 531.3 L471 531.4 L471.5 531.4 L472 531.6 L472.5 531.7 L473 531.7 L473.5 531.8 L474 531.9 L474.5 531.9 L475 532.1 L475.5 532.1 L476 532.3 L476.5 532.4 L477 532.4 L477.5 532.5 L478 532.5 L478.5 532.7 L479 532.8 L479.5 533.0 L480 533.2 L480.5 533.2 L481 533.2 L481.5 533.2 L482 533.2 L482.5 533.2 L483 533.4 L483.5 533.6 L484 533.6 L484.5 533.7 L485 533.8 L485.5 533.9 L486 533.9 L486.5 533.9 L487 534.0 L487.5 534.0 L488 534.0 L488.5 534.1 L489 534.3 L489.5 534.5 L490 534.4 L490.5 534.6 L491 534.5 L491.5 534.6 L492 534.7 L492.5 534.7 L493 534.9 L493.5 535.0 L494 535.0 L494.5 535.1 L495 535.1 L495.5 535.2 L496 535.3 L496.5 535.4 L497 535.4 L497.5 535.4 L498 535.4 L498.5 535.5 L499 535.5 L499.5 535.5 L500 535.6 L500.5 535.7 L501 535.8 L501.5 536.0 L502 536.1 L502.5 536.1 L503 536.1 L503.5 536.2 L504 536.3 L504.5 536.4 L505 536.4 L505.5 536.4 L506 536.4 L506.5 536.5 L507 536.6 L507.5 536.6 L508 536.6 L508.5 536.8 L509 536.8 L509.5 536.8 L510 537.0 L510.5 537.1 L511 537.0 L511.5 537.0 L512 537.1 L512.5 537.1 L513 537.1 L513.5 537.1 L514 537.1 L514.5 537.2 L515 537.2 L515.5 537.4 L516 537.3 L516.5 537.3 L517 537.4 L517.5 537.4 L518 537.5 L518.5 537.5 L519 537.4 L519.5 537.4 L520 537.5 L520.5 537.5 L521 537.7 L521.5 537.6 L522 537.6 L522.5 537.8 L523 537.9 L523.5 537.9 L524 537.9 L524.5 537.9 L525 538.0 L525.5 538.1 L526 538.0 L526.5 538.2 L527 538.1 L527.5 538.2 L528 538.3 L528.5 538.2 L529 538.3 L529.5 538.4 L530 538.4 L530.5 538.3 L531 538.3 L531.5 538.3 L532 538.3 L532.5 538.4 L533 538.4 L533.5 538.5 L534 538.6 L534.5 538.6 L535 538.7 L535.5 538.7 L536 538.7 L536.5 538.7 L537 538.7 L537.5 538.7 L538 538.8 L538.5 538.9 L539 538.8 L539.5 538.8 L540 539.0 L540.5 538.9 L541 538.9 L541.5 539.0 L542 539.0 L542.5 539.2 L543 539.2 L543.5 539.2 L544 539.2 L544.5 539.4 L545 539.3 L545.5 539.3 L546 539.4 L546.5 539.3 L547 539.4 L547.5 539.4 L548 539.4 L548.5 539.6 L549 539.6 L549.5 539.6 L550 539.5 L550.5 539.5 L551 539.7 L551.5 539.7 L552 539.8 L552.5 539.9 L553 539.8 L553.5 539.7 L554 539.8 L554.5 539.9 L555 540.0 L555.5 540.0 L556 539.9 L556.5 540.1 L557 540.0 L557.5 540.2 L558 540.3 L558.5 540.3 L559 540.3 L559.5 540.3 L560 540.4 L560.5 540.3 L561 540.5 L561.5 540.4 L562 540.5 L562.5 540.5 L563 540.6 L563.5 540.6 L564 540.6 L564.5 540.6 L565 540.7 L565.5 540.7 L566 540.7 L566.5 540.8 L567 540.9 L567.5 540.8 L568 540.8 L568.5 540.8 L569 540.8 L569.5 540.8 L570 540.8 L570.5 540.9 L571 540.9 L571.5 540.9 L572 540.9 L572.5 541.0 L573 541.1 L573.5 541.1 L574 541.2 L574.5 541.1 L575 541.1 L575.5 541.3 L576 541.4 L576.5 541.3 L577 541.4 L577.5 541.5 L578 541.4 L578.5 541.5 L579 541.5 L579.5 541.6 L580 541.6 L580.5 541.6 L581 541.7 L581.5 541.8 L582 541.7 L582.5 541.7 L583 541.6 L583.5 541.8 L584 541.8 L584.5 541.8 L585 541.9 L585.5 541.9 L586 542.0 L586.5 542.1 L587 542.2 L587.5 542.3 L588 542.2 L588.5 542.2 L589 542.2 L589.5 542.3 L590 542.3 L590.5 542.4 L591 542.3 L591.5 542.2 L592 542.2 L592.5 542.4 L593 542.5 L593.5 542.4 L594 542.5 L594.5 542.4 L595 542.5 L595.5 542.6 L596 542.6 L596.5 542.6 L597 542.6 L597.5 542.8 L598 542.7 L598.5 542.7 L599 542.8 L599.5 542.9 L600 542.8 L600.5 542.9 L601 543.0 L601.5 543.1 L602 543.1 L602.5 543.2 L603 543.0 L603.5 543.0 L604 543.0 L604.5 543.0 L605 543.0 L605.5 543.1 L606 543.2 L606.5 543.2 L607 543.1 L607.5 543.1 L608 543.3 L608.5 543.2 L609 543.2 L609.5 543.2 L610 543.2 L610.5 543.3 L611 543.3 L611.5 543.3 L612 543.3 L612.5 543.3 L613 543.4 L613.5 543.5 L614 543.5 L614.5 543.6 L615 543.7 L615.5 543.7 L616 543.8 L616.5 543.8 L617 543.7 L617.5 543.7 L618 543.8 L618.5 543.7 L619 543.7 L619.5 543.8 L620 543.8 L620.5 543.8 L621 543.8 L621.5 543.9 L622 543.8 L622.5 543.8 L623 543.8 L623.5 543.8 L624 543.8 L624.5 544.0 L625 544.0 L625.5 544.0 L626 544.1 L626.5 544.1 L627 544.2 L627.5 544.3 L628 544.3 L628.5 544.3 L629 544.4 L629.5 544.2 L630 544.2 L630.5 544.3 L631 544.2 L631.5 544.2 L632 544.2 L632.5 544.2 L633 544.2 L633.5 544.4 L634 544.4 L634.5 544.4 L635 544.5 L635.5 544.4 L636 544.5 L636.5 544.5 L637 544.6 L637.5 544.6 L638 544.6 L638.5 544.7 L639 544.6 L639.5 544.6 L640 544.6 L640.5 544.6 L641 544.7 L641.5 544.8 L642 544.7 L642.5 544.7 L643 544.8 L643.5 544.8 L644 544.8 L644.5 545.0 L645 545.0 L645.5 545.1 L646 545.1 L646.5 545.0 L647 545.0 L647.5 544.9 L648 544.9 L648.5 545.0 L649 544.9 L649.5 544.9 L650 545.1 L650.5 545.0 L651 545.1 L651.5 545.1 L652 545.0 L652.5 545.1 L653 545.2 L653.5 545.1 L654 545.1 L654.5 545.2 L655 545.1 L655.5 545.1 L656 545.2 L656.5 545.3 L657 545.3 L657.5 545.4 L658 545.4 L658.5 545.5 L659 545.5 L659.5 545.6 L660 545.6 L660.5 545.5 L661 545.5 L661.5 545.6 L662 545.6 L662.5 545.6 L663 545.5 L663.5 545.6 L664 545.5 L664.5 545.4 L665 545.5 L665.5 545.6 L666 545.7 L666.5 545.6 L667 545.6 L667.5 545.6 L668 545.7 L668.5 545.7 L669 545.7 L669.5 545.7 L670 545.7 L670.5 545.7 L671 545.7 L671.5 545.8 L672 545.8 L672.5 545.7 L673 545.6 L673.5 545.6 L674 545.8 L674.5 545.9 L675 545.9 L675.5 545.9 L676 545.9 L676.5 545.9 L677 545.9 L677.5 546.0 L678 546.0 L678.5 545.9 L679 545.9 L679.5 545.9 L680 545.9 L680.5 545.9 L681 546.0 L681.5 546.0 L682 545.9 L682.5 545.9 L683 546.0 L683.5 546.1 L684 546.0 L684.5 546.0 L685 545.9 L685.5 546.0 L686 546.0 L686.5 546.1 L687 546.0 L687.5 546.1 L688 546.0 L688.5 545.9 L689 546.0 L689.5 546.0 L690 546.0 L690.5 546.0 L691 546.0 L691.5 546.1 L692 546.2 L692.5 546.1 L693 546.2 L693.5 546.3 L694 546.2 L694.5 546.2 L695 546.2 L695.5 546.2 L696 546.1 L696.5 546.3 L697 546.3 L697.5 546.2 L698 546.3 L698.5 546.3 L699 546.3 L699.5 546.2 L700 546.3 L700.5 546.4 L701 546.4 L701.5 546.3 L702 546.3 L702.5 546.4 L703 546.3 L703.5 546.3 L704 546.2 L704.5 546.2 L705 546.2 L705.5 546.3 L706 546.2 L706.5 546.3 L707 546.4 L707.5 546.4 L708 546.3 L708.5 546.3 L709 546.4 L709.5 546.4 L710 546.5 L710.5 546.5 L711 546.5 L711.5 546.5 L712 546.6 L712.5 546.5 L713 546.5 L713.5 546.5 L714 546.4 L714.5 546.4 L715 546.6 L715.5 546.5 L716 546.4 L716.5 546.5 L717 546.7 L717.5 546.6 L718 546.6 L718.5 546.6 L719 546.5 L719.5 546.5 L720 546.4 L720.5 546.6 L721 546.6 L721.5 546.5 L722 546.6 L722.5 546.7 L723 546.6 L723.5 546.5 L724 546.6 L724.5 546.6 L725 546.6 L725.5 546.6 L726 546.5 L726.5 546.6 L727 546.6 L727.5 546.6 L728 546.6 L728.5 546.5 L729 546.5 L729.5 546.6 L730 546.5 L730.5 546.5 L731 546.5 L731.5 546.5 L732 546.5 L732.5 546.5 L733 546.4 L733.5 546.5 L734 546.4 L734.5 546.5 L735 546.4 L735.5 546.4 L736 546.4 L736.5 546.4 L737 546.3 L737.5 546.4 L738 546.5 L738.5 546.5 L739 546.4 L739.5 546.5 L740 546.5 L740.5 546.6 L741 546.5 L741.5 546.4 L742 546.5 L742.5 546.6 L743 546.7 L743.5 546.6 L744 546.7 L744.5 546.5 L745 546.6 L745.5 546.6 L746 546.7 L746.5 546.6 L747 546.5 L747.5 546.6 L748 546.7 L748.5 546.6 L749 546.6 L749.5 546.5 L750 546.6 L750.5 546.7 L751 546.7 L751.5 546.7 L752 546.7 L752.5 546.6 L753 546.6 L753.5 546.6 L754 546.7 L754.5 546.7 L755 546.7 L755.5 546.6 L756 546.6 L756.5 546.6 L757 546.5 L757.5 546.5 L758 546.6 L758.5 546.5 L759 546.4 L759.5 546.5 L760 546.5 L760.5 546.4 L761 546.5 L761.5 546.6 L762 546.7 L762.5 546.5 L763 546.5 L763.5 546.5 L764 546.5 L764.5 546.5 L765 546.6 L765.5 546.5 L766 546.5 L766.5 546.6 L767 546.7 L767.5 546.6 L768 546.6 L768.5 546.5 L769 546.5 L769.5 546.5 L769.5 561.5 Z"/></clipPath><rect x="386" y="410" width="30.5" height="152" fill="#6a6a6a" opacity="0.14" clip-path="url(#spc)"/>
</svg>
<svg class="a" style="left:390px;top:419px;opacity:0.22" width="24" height="24" viewBox="0 0 24 24">
<rect x="0.7" y="0.7" width="22.6" height="22.6" rx="3.5" fill="none" stroke="#b4b4b4" stroke-width="1.3"/><path d="M3.5 10 L6.5 14 L12.5 2.5" fill="none" stroke="#c8c8c8" stroke-width="1.6"/><rect x="15.5" y="3" width="1.6" height="1.6" fill="#c8c8c8"/><rect x="20" y="5" width="1.6" height="1.6" fill="#c8c8c8"/><rect x="20" y="9.5" width="1.6" height="1.6" fill="#c8c8c8"/><rect x="20" y="14" width="1.6" height="1.6" fill="#c8c8c8"/><rect x="20" y="18.5" width="1.6" height="1.6" fill="#c8c8c8"/><rect x="16" y="20" width="1.6" height="1.6" fill="#c8c8c8"/><rect x="11.5" y="20" width="1.6" height="1.6" fill="#c8c8c8"/><rect x="7.5" y="20" width="1.6" height="1.6" fill="#c8c8c8"/><rect x="7.5" y="16.5" width="1.6" height="1.6" fill="#c8c8c8"/></svg><svg class="a" style="left:390px;top:451px;opacity:0.22" width="24" height="24" viewBox="0 0 24 24">
<rect x="0.7" y="0.7" width="22.6" height="22.6" rx="3.5" fill="none" stroke="#b4b4b4" stroke-width="1.3"/><path d="M5.8 4.5 V19.5 H19.5" fill="none" stroke="#c8c8c8" stroke-width="1.6"/><path d="M5.8 7.5 L8 5 L10.5 7.5 L13.5 5.5 L16 8.5 L18.5 6.5" fill="none" stroke="#c8c8c8" stroke-width="1.2"/></svg><svg class="a" style="left:390px;top:483px;opacity:0.22" width="24" height="24" viewBox="0 0 24 24">
<rect x="0.7" y="0.7" width="22.6" height="22.6" rx="3.5" fill="none" stroke="#b4b4b4" stroke-width="1.3"/><rect x="4" y="10.5" width="16" height="3" fill="#c8c8c8"/><rect x="10.5" y="4" width="3" height="16" fill="#c8c8c8"/></svg><svg class="a" style="left:390px;top:515px;opacity:0.22" width="24" height="24" viewBox="0 0 24 24">
<rect x="0.7" y="0.7" width="22.6" height="22.6" rx="3.5" fill="none" stroke="#b4b4b4" stroke-width="1.3"/><rect x="4" y="10.5" width="16" height="3" fill="#c8c8c8"/></svg><svg class="a" style="left:390px;top:547px;opacity:0.22" width="24" height="24" viewBox="0 0 24 24">
<rect x="0.7" y="0.7" width="22.6" height="22.6" rx="3.5" fill="none" stroke="#b4b4b4" stroke-width="1.3"/><path d="M2.8 7.3 L9.3 11.2 L2.8 15 Z M21.2 7.3 L14.7 11.2 L21.2 15 Z" fill="#c8c8c8"/><rect x="11" y="4" width="2" height="2" fill="#c8c8c8"/><rect x="11" y="8" width="2" height="2" fill="#c8c8c8"/><rect x="11" y="12.8" width="2" height="2" fill="#c8c8c8"/><rect x="11" y="17" width="2" height="2" fill="#c8c8c8"/></svg><div class="a" style="left:401px;top:564px;width:2px;height:2px;background:#666"></div>
<div class="t" style="left:323px;top:210.6px;font-size:12.5px;color:#f0f0f0;transform:translate(-50%,-50%) rotate(-90deg);letter-spacing:0.6px;-webkit-text-stroke:0.2px #f0f0f0">Освещенность [лк]</div>
<div class="t" style="left:326px;top:483.2px;font-size:12.5px;color:#f0f0f0;transform:translate(-50%,-50%) rotate(-90deg);letter-spacing:0.5px;-webkit-text-stroke:0.2px #f0f0f0">Амплитуда [дБ]</div>
<!-- resize grip -->
<div class="a" style="left:790px;top:613px;width:2px;height:2px;background:#5e5e5e"></div><div class="a" style="left:786px;top:617px;width:2px;height:2px;background:#5e5e5e"></div><div class="a" style="left:790px;top:617px;width:2px;height:2px;background:#5e5e5e"></div><div class="a" style="left:782px;top:621px;width:2px;height:2px;background:#5e5e5e"></div><div class="a" style="left:786px;top:621px;width:2px;height:2px;background:#5e5e5e"></div><div class="a" style="left:790px;top:621px;width:2px;height:2px;background:#5e5e5e"></div>
<div class="t" style="top:10.42px;font-size:12.5px;font-weight:400;color:#1c1c1c;letter-spacing:-0.571px;;left:29px;">RadexLight 1.16.4 [RADEX LUPIN: 2019-01-31 2662]</div><div class="t" style="top:78.03px;font-size:16.5px;font-weight:400;color:#c8c8c8;letter-spacing:0.205px;;left:9px;">Подключенное устройство</div><div class="t" style="top:115.07px;font-size:13.5px;font-weight:700;color:#fff;letter-spacing:0.229px;;left:33px;">RADEX LUPIN: 2019-01-31 2662</div><div class="t" style="top:154.03px;font-size:16.5px;font-weight:400;color:#c8c8c8;letter-spacing:-0.022px;;left:9px;">Значение</div><div class="t" style="top:193.23px;font-size:14.5px;font-weight:700;color:#fff;letter-spacing:0.588px;;left:33px;">Освещенность: 102 лк</div><div class="t" style="top:259.53px;font-size:16.5px;font-weight:400;color:#c8c8c8;letter-spacing:-0.222px;;left:9px;">Пульсация</div><div class="t" style="top:298.93px;font-size:14.5px;font-weight:700;color:#fff;letter-spacing:0.737px;;left:131px;">96 %</div><div class="t" style="top:372.23px;font-size:14.5px;font-weight:700;color:#fff;letter-spacing:0.403px;;left:60px;">Частоты: 120; 240 [Гц]</div><div class="t" style="top:409.03px;font-size:16.5px;font-weight:400;color:#c8c8c8;letter-spacing:0.189px;;left:9px;">Комментарии</div><div class="t" style="top:44.03px;font-size:14.5px;font-weight:400;color:#fff;letter-spacing:0.457px;;left:605px;">Русский</div><div class="t" style="top:84.94px;font-size:12px;font-weight:400;color:#eee;letter-spacing:0.414px;;-webkit-text-stroke:0.2px #eee;left:497.5px;">Осциллограмма</div><div class="t" style="top:109.12px;font-size:12.5px;font-weight:400;color:#f0f0f0;letter-spacing:0.65px;-webkit-text-stroke:0.2px #f0f0f0;right:417.9px;">196,06</div><div class="t" style="top:128.77px;font-size:12.5px;font-weight:400;color:#f0f0f0;letter-spacing:0.65px;-webkit-text-stroke:0.2px #f0f0f0;right:417.9px;">176,45</div><div class="t" style="top:148.42px;font-size:12.5px;font-weight:400;color:#f0f0f0;letter-spacing:0.65px;-webkit-text-stroke:0.2px #f0f0f0;right:417.9px;">156,85</div><div class="t" style="top:168.07px;font-size:12.5px;font-weight:400;color:#f0f0f0;letter-spacing:0.65px;-webkit-text-stroke:0.2px #f0f0f0;right:417.9px;">137,24</div><div class="t" style="top:187.72px;font-size:12.5px;font-weight:400;color:#f0f0f0;letter-spacing:0.65px;-webkit-text-stroke:0.2px #f0f0f0;right:417.9px;">117,63</div><div class="t" style="top:207.37px;font-size:12.5px;font-weight:400;color:#f0f0f0;letter-spacing:0.65px;-webkit-text-stroke:0.2px #f0f0f0;right:417.9px;">98,03</div><div class="t" style="top:227.02px;font-size:12.5px;font-weight:400;color:#f0f0f0;letter-spacing:0.65px;-webkit-text-stroke:0.2px #f0f0f0;right:417.9px;">78,42</div><div class="t" style="top:246.67px;font-size:12.5px;font-weight:400;color:#f0f0f0;letter-spacing:0.65px;-webkit-text-stroke:0.2px #f0f0f0;right:417.9px;">58,82</div><div class="t" style="top:266.32px;font-size:12.5px;font-weight:400;color:#f0f0f0;letter-spacing:0.65px;-webkit-text-stroke:0.2px #f0f0f0;right:417.9px;">39,21</div><div class="t" style="top:285.97px;font-size:12.5px;font-weight:400;color:#f0f0f0;letter-spacing:0.65px;-webkit-text-stroke:0.2px #f0f0f0;right:417.9px;">19,61</div><div class="t" style="top:305.62px;font-size:12.5px;font-weight:400;color:#f0f0f0;letter-spacing:0.65px;-webkit-text-stroke:0.2px #f0f0f0;right:417.9px;">0,0</div><div class="t" style="top:331.62px;font-size:12.5px;font-weight:400;color:#f0f0f0;letter-spacing:0.75px;-webkit-text-stroke:0.2px #f0f0f0;left:291.35px;width:200px;text-align:center;">0.00</div><div class="t" style="top:331.62px;font-size:12.5px;font-weight:400;color:#f0f0f0;letter-spacing:0.75px;-webkit-text-stroke:0.2px #f0f0f0;left:367.55px;width:200px;text-align:center;">0.20</div><div class="t" style="top:331.62px;font-size:12.5px;font-weight:400;color:#f0f0f0;letter-spacing:0.75px;-webkit-text-stroke:0.2px #f0f0f0;left:443.75px;width:200px;text-align:center;">0.40</div><div class="t" style="top:331.62px;font-size:12.5px;font-weight:400;color:#f0f0f0;letter-spacing:0.75px;-webkit-text-stroke:0.2px #f0f0f0;left:519.95px;width:200px;text-align:center;">0.60</div><div class="t" style="top:331.62px;font-size:12.5px;font-weight:400;color:#f0f0f0;letter-spacing:0.75px;-webkit-text-stroke:0.2px #f0f0f0;left:596.15px;width:200px;text-align:center;">0.80</div><div class="t" style="top:331.62px;font-size:12.5px;font-weight:400;color:#f0f0f0;letter-spacing:0.75px;-webkit-text-stroke:0.2px #f0f0f0;left:672.35px;width:200px;text-align:center;">1.00</div><div class="t" style="top:344.62px;font-size:12.5px;font-weight:400;color:#f0f0f0;letter-spacing:0.414px;;-webkit-text-stroke:0.2px #f0f0f0;left:550.7px;">Время [с]</div><div class="t" style="top:386.54px;font-size:12px;font-weight:400;color:#eee;letter-spacing:0.518px;;-webkit-text-stroke:0.2px #eee;left:524.7px;">Спектр</div><div class="t" style="top:399.42px;font-size:12.5px;font-weight:400;color:#f0f0f0;letter-spacing:0.65px;-webkit-text-stroke:0.2px #f0f0f0;right:433.4px;">0</div><div class="t" style="top:430.72px;font-size:12.5px;font-weight:400;color:#f0f0f0;letter-spacing:0.65px;-webkit-text-stroke:0.2px #f0f0f0;right:433.4px;">-20</div><div class="t" style="top:462.02px;font-size:12.5px;font-weight:400;color:#f0f0f0;letter-spacing:0.65px;-webkit-text-stroke:0.2px #f0f0f0;right:433.4px;">-40</div><div class="t" style="top:493.32px;font-size:12.5px;font-weight:400;color:#f0f0f0;letter-spacing:0.65px;-webkit-text-stroke:0.2px #f0f0f0;right:433.4px;">-60</div><div class="t" style="top:524.62px;font-size:12.5px;font-weight:400;color:#f0f0f0;letter-spacing:0.65px;-webkit-text-stroke:0.2px #f0f0f0;right:433.4px;">-80</div><div class="t" style="top:555.92px;font-size:12.5px;font-weight:400;color:#f0f0f0;letter-spacing:0.65px;-webkit-text-stroke:0.2px #f0f0f0;right:433.4px;">-100</div><div class="t" style="top:572.02px;font-size:12.5px;font-weight:400;color:#f0f0f0;letter-spacing:0.6px;-webkit-text-stroke:0.2px #f0f0f0;left:275.7px;width:200px;text-align:center;">0</div><div class="t" style="top:572.02px;font-size:12.5px;font-weight:400;color:#f0f0f0;letter-spacing:0.6px;-webkit-text-stroke:0.2px #f0f0f0;left:341.8px;width:200px;text-align:center;">500</div><div class="t" style="top:572.02px;font-size:12.5px;font-weight:400;color:#f0f0f0;letter-spacing:0.6px;-webkit-text-stroke:0.2px #f0f0f0;left:407.9px;width:200px;text-align:center;">1000</div><div class="t" style="top:572.02px;font-size:12.5px;font-weight:400;color:#f0f0f0;letter-spacing:0.6px;-webkit-text-stroke:0.2px #f0f0f0;left:473.9999999999999px;width:200px;text-align:center;">1500</div><div class="t" style="top:572.02px;font-size:12.5px;font-weight:400;color:#f0f0f0;letter-spacing:0.6px;-webkit-text-stroke:0.2px #f0f0f0;left:540.0999999999999px;width:200px;text-align:center;">2000</div><div class="t" style="top:572.02px;font-size:12.5px;font-weight:400;color:#f0f0f0;letter-spacing:0.6px;-webkit-text-stroke:0.2px #f0f0f0;left:606.1999999999999px;width:200px;text-align:center;">2500</div><div class="t" style="top:572.02px;font-size:12.5px;font-weight:400;color:#f0f0f0;letter-spacing:0.6px;-webkit-text-stroke:0.2px #f0f0f0;left:672.3px;width:200px;text-align:center;">3000</div><div class="t" style="top:585.42px;font-size:12.5px;font-weight:400;color:#f0f0f0;letter-spacing:0.527px;;-webkit-text-stroke:0.2px #f0f0f0;left:534px;">Частота [Гц]</div>
</body></html>
